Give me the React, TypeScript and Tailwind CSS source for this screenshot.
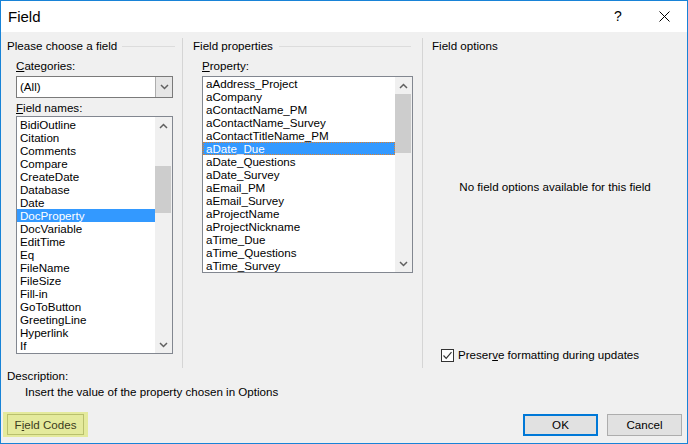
import React from "react"

const leftItems = [
  "BidiOutline",
  "Citation",
  "Comments",
  "Compare",
  "CreateDate",
  "Database",
  "Date",
  "DocProperty",
  "DocVariable",
  "EditTime",
  "Eq",
  "FileName",
  "FileSize",
  "Fill-in",
  "GoToButton",
  "GreetingLine",
  "Hyperlink",
  "If",
]

const propItems = [
  "aAddress_Project",
  "aCompany",
  "aContactName_PM",
  "aContactName_Survey",
  "aContactTitleName_PM",
  "aDate_Due",
  "aDate_Questions",
  "aDate_Survey",
  "aEmail_PM",
  "aEmail_Survey",
  "aProjectName",
  "aProjectNickname",
  "aTime_Due",
  "aTime_Questions",
  "aTime_Survey",
]

function Chevron({ up }: { up?: boolean }) {
  return (
    <svg width="9" height="6" viewBox="0 0 9 6" className="block">
      <path
        d={up ? "M1 5 L4.5 1.5 L8 5" : "M1 1 L4.5 4.5 L8 1"}
        fill="none"
        stroke="#606060"
        strokeWidth="1.5"
      />
    </svg>
  )
}

function ScrollBar({ thumb }: { thumb: string }) {
  return (
    <div className="w-[17px] flex flex-col bg-[#f0f0f0]">
      <div className="h-[17px] flex items-center justify-center">
        <Chevron up />
      </div>
      <div className="flex-1">
        <div className={`w-[16px] bg-[#cdcdcd] ${thumb}`} />
      </div>
      <div className="h-[17px] flex items-center justify-center">
        <Chevron />
      </div>
    </div>
  )
}

function Heading({ text, line }: { text: string; line?: string }) {
  return (
    <div className="flex items-center h-[15px]">
      <span className="whitespace-nowrap leading-[16px] h-[15px]">{text}</span>
      {line && <div className={`h-px mt-[1px] bg-[#dcdcdc] ${line}`} />}
    </div>
  )
}

export default function App() {
  return (
    <div className="w-[688px] h-[444px] flex flex-col border border-[#1883d7] bg-[#f0f0f0] text-[11.6px] text-black font-['Liberation_Sans',Arial,sans-serif] overflow-hidden">
      {/* title bar */}
      <div className="h-[31px] shrink-0 bg-white flex items-center">
        <span className="pl-[7px] text-[15px] leading-[18px]">Field</span>
        <div className="ml-auto flex">
          <div className="w-[46px] h-[31px] flex items-center justify-center text-[14px]">?</div>
          <div className="w-[46px] h-[31px] flex items-center justify-center">
            <svg width="11" height="11" viewBox="0 0 11 11">
              <path d="M0.5 0.5 L10.5 10.5 M10.5 0.5 L0.5 10.5" stroke="#000" strokeWidth="1" />
            </svg>
          </div>
        </div>
      </div>

      {/* columns */}
      <div className="mt-[6px] h-[330px] flex">
        {/* left column */}
        <div className="w-[182px] border-r border-[#d5d5d5] pl-[6px]">
          <Heading text="Please choose a field" line="ml-[5px] w-[53px]" />
          <div className="ml-[9px]">
            <div className="mt-[5px] h-[15px] leading-[16px]">
              <span className="underline">C</span>ategories:
            </div>
            <div className="mt-[3px] w-[157px] h-[22px] flex border border-[#7a7a7a] bg-white">
              <div className="flex-1 pl-[3px] flex items-center">(All)</div>
              <div className="w-[17px] border-l border-[#adadad] bg-[#e6e6e6] flex items-center justify-center">
                <Chevron />
              </div>
            </div>
            <div className="mt-[2px] h-[15px] leading-[16px]">
              <span className="underline">F</span>ield names:
            </div>
            <div className="mt-[1px] w-[157px] h-[238px] flex border border-[#828790] bg-white overflow-hidden">
              <div className="w-[138px] pt-[1px]">
                {leftItems.map((it) => (
                  <div
                    key={it}
                    className={`h-[13px] leading-[14px] pl-[3px] whitespace-nowrap ${
                      it === "DocProperty" ? "bg-[#3399ff] text-white" : ""
                    }`}
                  >
                    {it}
                  </div>
                ))}
              </div>
              <ScrollBar thumb="mt-[32px] h-[47px]" />
            </div>
          </div>
        </div>

        {/* middle column */}
        <div className="w-[240px] border-r border-[#d5d5d5] pl-[10px]">
          <Heading text="Field properties" line="ml-[6px] w-[132px]" />
          <div className="ml-[9px]">
            <div className="mt-[5px] h-[15px] leading-[16px]">
              <span className="underline">P</span>roperty:
            </div>
            <div className="mt-[3px] w-[211px] h-[197px] flex border border-[#828790] bg-white overflow-hidden">
              <div className="w-[192px]">
                {propItems.map((it) => (
                  <div
                    key={it}
                    className={`h-[13px] leading-[12px] pl-[2px] border whitespace-nowrap ${
                      it === "aDate_Due"
                        ? "bg-[#3399ff] text-white border-dotted border-[#e0802a]"
                        : "border-transparent"
                    }`}
                  >
                    {it}
                  </div>
                ))}
              </div>
              <ScrollBar thumb="mt-0 h-[59px]" />
            </div>
          </div>
        </div>

        {/* right column */}
        <div className="flex-1 flex flex-col">
          <div className="pl-[9px]">
            <Heading text="Field options" />
          </div>
          <div className="mt-[126px] h-[15px] leading-[15px] text-center">
            No field options available for this field
          </div>
          <div className="flex-1" />
          <div className="pl-[18px] pb-[5px] flex items-center h-[21px]">
            <div className="w-[13px] h-[13px] border border-[#333] bg-white flex items-center justify-center">
              <svg width="11" height="11" viewBox="0 0 11 11">
                <path d="M1.5 5.5 L4.2 8.3 L9.5 2.2" fill="none" stroke="#333" strokeWidth="1.2" />
              </svg>
            </div>
            <span className="ml-[4px] leading-[16px]">
              Preser<span className="underline">v</span>e formatting during updates
            </span>
          </div>
        </div>
      </div>

      {/* description */}
      <div className="pl-[6px] h-[15px] leading-[15px]">Description:</div>
      <div className="mt-[1px] pl-[24px] h-[15px] leading-[15px]">
        Insert the value of the property chosen in Options
      </div>

      {/* buttons */}
      <div className="mt-[13px] flex items-center">
        <div className="ml-[2px] px-[4px] py-[2px] bg-[#e4ea9c]">
          <div className="w-[77px] h-[21px] border border-[#b9c06e] flex items-center justify-center text-[#3c3c1c]">
            F<span className="underline">i</span>eld Codes
          </div>
        </div>
        <div className="ml-auto w-[75px] h-[22px] border-2 border-[#0078d7] bg-[#e1e1e1] flex items-center justify-center">
          OK
        </div>
        <div className="ml-[9px] mr-[5px] w-[75px] h-[22px] border border-[#adadad] bg-[#e1e1e1] flex items-center justify-center">
          Cancel
        </div>
      </div>
    </div>
  )
}
